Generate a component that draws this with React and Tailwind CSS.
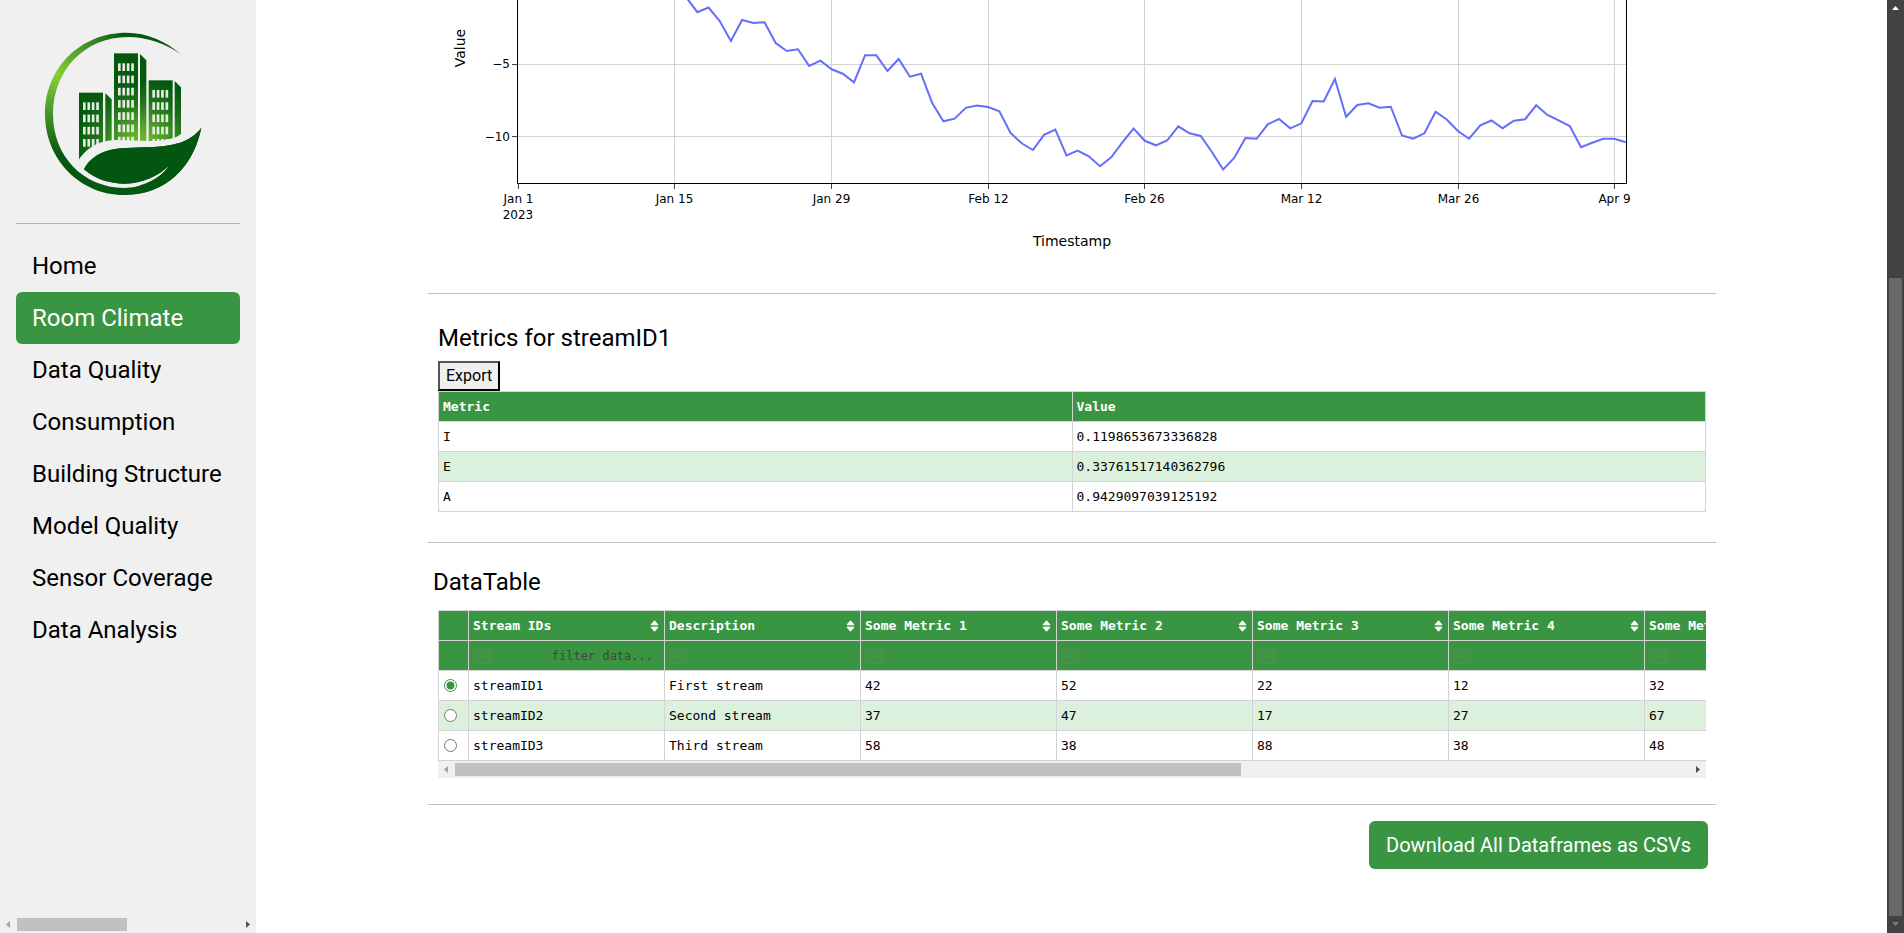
import React from "react";

const NAV = [
  "Home",
  "Room Climate",
  "Data Quality",
  "Consumption",
  "Building Structure",
  "Model Quality",
  "Sensor Coverage",
  "Data Analysis",
];

const METRICS = [
  ["I", "0.1198653673336828"],
  ["E", "0.33761517140362796"],
  ["A", "0.9429097039125192"],
];

const COLUMNS = [
  "Stream IDs",
  "Description",
  "Some Metric 1",
  "Some Metric 2",
  "Some Metric 3",
  "Some Metric 4",
  "Some Metric 5",
];

const STREAMS = [
  ["streamID1", "First stream", 42, 52, 22, 12, 32],
  ["streamID2", "Second stream", 37, 47, 17, 27, 67],
  ["streamID3", "Third stream", 58, 38, 88, 38, 48],
];

// Daily readings as plot heights, starting on Jan 16.
const FIRST_DAY = 15;
const LINE = [
  -2.6, 12.2, 7.5, 21, 41, 20, 23, 22.3, 43, 51, 49.3, 66, 60.7, 69.3, 73.7, 82.3, 55.2, 55.3, 71, 59,
  76.7, 73.7, 103, 121.3, 118.7, 107.8, 105.5, 107, 111.3, 133, 143.3, 150, 134.8, 129.7, 155.5, 150.7,
  156.3, 166.2, 157.3, 142.3, 128.6, 140.8, 145.3, 140.5, 126.3, 133.3, 136, 152, 169.5, 158, 138, 138.8,
  124.3, 119, 128.3, 123.3, 101, 101.5, 79, 116.7, 105, 103.3, 107.7, 106.7, 135.5, 138.7, 133.3, 111.8,
  119.5, 131, 138.7, 125.3, 120.5, 128.2, 120.7, 119.2, 105.3, 115, 120.3, 126, 147.2, 142.8, 138.8,
  138.8, 142.3,
];
const DAY = 11.185;
const ORIGIN = 90.4;
const POINTS = LINE.map((y, i) => `${(ORIGIN + (i + FIRST_DAY) * DAY).toFixed(1)},${y}`).join(" ");

const X_TICKS = [
  [90.5, "Jan 1"],
  [246.5, "Jan 15"],
  [403.5, "Jan 29"],
  [560.5, "Feb 12"],
  [716.5, "Feb 26"],
  [873.5, "Mar 12"],
  [1030.5, "Mar 26"],
  [1186.5, "Apr 9"],
];

function Building({ x, y, w, sideX, sideTop, bottom, rows, winX, winY }) {
  const windows = [];
  for (let r = 0; r < rows; r++) {
    for (let c = 0; c < 4; c++) {
      windows.push(
        <rect key={`${r}-${c}`} x={winX + c * 13.2} y={winY + r * 36.7} width="8" height="23" fill="#e4ece0" />
      );
    }
  }
  return (
    <g>
      <rect x={x} y={y} width={w} height={bottom - y} fill="url(#tower)" />
      <path d={`M${sideX} ${y + 2} L${sideX + 19} ${sideTop} V${bottom} H${sideX} Z`} fill="url(#tower)" />
      {windows}
    </g>
  );
}

function Logo() {
  return (
    <svg viewBox="48 48 672 573" className="block w-full" role="img" aria-label="Green city logo">
      <defs>
        <radialGradient id="tower" gradientUnits="userSpaceOnUse" cx="425" cy="440" r="200">
          <stop offset="0" stopColor="#7dc332" />
          <stop offset="0.3" stopColor="#57a329" />
          <stop offset="0.7" stopColor="#1d701a" />
          <stop offset="1" stopColor="#04590f" />
        </radialGradient>
        <radialGradient id="ring" gradientUnits="userSpaceOnUse" cx="170" cy="225" r="240">
          <stop offset="0" stopColor="#86d039" />
          <stop offset="0.45" stopColor="#4c9a2b" />
          <stop offset="1" stopColor="#04580f" />
        </radialGradient>
      </defs>
      <Building x={237} y={278} w={72} sideX={316} sideTop={298} bottom={480} rows={4} winX={249} winY={307} />
      <Building x={342} y={160} w={72} sideX={420} sideTop={181} bottom={440} rows={7} winX={354} winY={190} />
      <Building x={446} y={241} w={72} sideX={524} sideTop={262} bottom={440} rows={5} winX={457} winY={270} />
      <path
        d="M234 482 C255 450 290 422 342 420 C400 419 480 432 530 410 L552 396 L552 450 L300 500 L236 500 Z"
        fill="#f0f0f0"
      />
      <path
        d="M542 162 C500 125 440 98 380 98 C240 98 135 205 135 342 C135 478 240 585 372 585 C500 585 580 500 604 383 C570 428 520 436 470 440 C420 444 370 440 330 450 C290 460 262 485 252 508 C290 540 330 551 375 551 C430 551 480 525 508 496 C484 533 430 564 372 564 C250 562 159 470 159 342 C159 215 250 111 385 111 C440 111 500 132 542 162 Z"
        fill="url(#ring)"
      />
      <path
        d="M604 383 C570 428 520 436 470 440 C420 444 370 440 330 450 C290 460 262 485 252 508 C290 540 330 551 375 551 C430 551 480 525 508 496 C488 528 455 547 420 556 L420 580 C520 560 585 480 604 383 Z"
        fill="#02560f"
      />
    </svg>
  );
}

function Arrow({ dir, className }) {
  const paths = {
    left: "M10 5 V12 L6 8.5 Z",
    right: "M7 5 V12 L11 8.5 Z",
    up: "M5 10 H12 L8.5 6 Z",
    down: "M5 6 H12 L8.5 10 Z",
  };
  return (
    <svg viewBox="0 0 17 17" className={`size-[17px] shrink-0 ${className}`} aria-hidden="true">
      <path d={paths[dir]} fill="currentColor" />
    </svg>
  );
}

function Chart() {
  return (
    <svg
      viewBox="0 0 1288 269"
      className="block w-full font-['DejaVu_Sans',Verdana,sans-serif]"
      role="img"
      aria-label="Value by timestamp"
    >
      <g stroke="#d3d3d3" strokeWidth="1" shapeRendering="crispEdges">
        {X_TICKS.slice(1).map(([x]) => (
          <line key={x} x1={x} x2={x} y1="0" y2="183" />
        ))}
        <line x1="90" x2="1198" y1="64.5" y2="64.5" />
        <line x1="90" x2="1198" y1="136.5" y2="136.5" />
      </g>
      <polyline points={POINTS} fill="none" stroke="#636efa" strokeWidth="2" strokeLinejoin="miter" />
      <g stroke="#000" strokeWidth="1" fill="none" shapeRendering="crispEdges">
        <path d="M89.5 0 V183.5 H1198.5 V0" />
      </g>
      <g stroke="#444" strokeWidth="1" shapeRendering="crispEdges">
        {X_TICKS.map(([x]) => (
          <line key={x} x1={x} x2={x} y1="184" y2="189" />
        ))}
        <line x1="84" x2="89" y1="64.5" y2="64.5" />
        <line x1="84" x2="89" y1="136.5" y2="136.5" />
      </g>
      <g fontSize="12" textAnchor="middle" fill="#000">
        {X_TICKS.map(([x, label]) => (
          <text key={label} x={x} y="203">
            {label}
          </text>
        ))}
        <text x="90" y="219">
          2023
        </text>
      </g>
      <g fontSize="12" textAnchor="end" fill="#000">
        <text x="82" y="68">
          −5
        </text>
        <text x="82" y="141">
          −10
        </text>
      </g>
      <g fontSize="14" textAnchor="middle" fill="#000">
        <text x="644" y="246">
          Timestamp
        </text>
        <text transform="translate(37 48) rotate(-90)">Value</text>
      </g>
    </svg>
  );
}

function SortIcon() {
  return (
    <svg viewBox="0 0 9 12" className="h-3 w-[9px]" aria-hidden="true">
      <path
        d="M4.5 0.8 L8 4.8 H1 Z M4.5 11.2 L1 7.2 H8 Z"
        fill="#fff"
        stroke="#fff"
        strokeWidth="1"
        strokeLinejoin="round"
      />
    </svg>
  );
}

export default function App() {
  return (
    <div className="flex h-screen overflow-hidden bg-white font-[Roboto,sans-serif] text-black">
      <aside className="flex w-64 shrink-0 flex-col bg-[#f0f0f0]">
        <div className="flex-1 px-4 pt-4">
          <Logo />
          <hr className="my-4 border-[#b4b4b4]" />
          <nav className="flex flex-col">
            {NAV.map((item) => (
              <a
                key={item}
                href="#"
                className={
                  item === "Room Climate"
                    ? "rounded-md bg-[#3a9542] px-4 py-2 text-2xl leading-9 whitespace-nowrap text-white"
                    : "px-4 py-2 text-2xl leading-9 whitespace-nowrap"
                }
              >
                {item}
              </a>
            ))}
          </nav>
        </div>
        <div className="flex h-[17px] items-center">
          <Arrow dir="left" className="text-[#a3a3a3]" />
          <div className="flex-1">
            <div className="h-[13px] w-[49.5%] bg-[#c1c1c1]" />
          </div>
          <Arrow dir="right" className="text-[#505050]" />
        </div>
      </aside>

      <main className="min-w-0 flex-1 overflow-hidden pr-[171px] pl-[172px]">
        <Chart />

        <section className="mt-6 border-t border-[#c0c0c0] px-[10px] pt-[30px] pb-[30px]">
          <h2 className="text-2xl leading-7 font-normal">Metrics for streamID1</h2>
          <button
            type="button"
            className="mt-[9px] block h-[30px] border-2 border-t-[#555] border-r-black border-b-black border-l-[#555] bg-[#efefef] px-[6px] text-base leading-6"
          >
            Export
          </button>
          <table className="w-full table-fixed border-collapse font-['DejaVu_Sans_Mono',monospace] text-[13px] leading-5">
            <thead>
              <tr className="h-[30px] bg-[#3a9542] text-left text-white">
                <th className="border border-[#d3d3d3] px-1 font-bold">Metric</th>
                <th className="border border-[#d3d3d3] px-1 font-bold">Value</th>
              </tr>
            </thead>
            <tbody>
              {METRICS.map(([name, value]) => (
                <tr key={name} className="h-[30px] even:bg-[#dcf1dd]">
                  <td className="border border-[#d3d3d3] px-1">{name}</td>
                  <td className="border border-[#d3d3d3] px-1">{value}</td>
                </tr>
              ))}
            </tbody>
          </table>
        </section>

        <section className="border-y border-[#c0c0c0] pt-[25px] pb-[26px]">
          <h2 className="pl-[5px] text-2xl leading-7 font-normal">DataTable</h2>
          <div className="mx-[10px] mt-[14px]">
            <div className="overflow-hidden">
              <table className="w-[1403px] table-fixed border-collapse font-['DejaVu_Sans_Mono',monospace] text-[13px] leading-5">
                <colgroup>
                  <col className="w-[30px]" />
                  {COLUMNS.map((c) => (
                    <col key={c} className="w-[196px]" />
                  ))}
                </colgroup>
                <thead>
                  <tr className="h-[30px] bg-[#3a9542] text-left text-white">
                    <th className="border border-[#d3d3d3]" />
                    {COLUMNS.map((c) => (
                      <th key={c} className="border border-[#d3d3d3] px-1 font-bold">
                        <div className="flex items-center justify-between">
                          {c}
                          <button type="button" aria-label={`Sort by ${c}`} className="pr-[1px]">
                            <SortIcon />
                          </button>
                        </div>
                      </th>
                    ))}
                  </tr>
                  <tr className="h-[30px] bg-[#3a9542]">
                    <th className="border border-[#d3d3d3]" />
                    {COLUMNS.map((c, i) => (
                      <th key={c} className="border border-[#d3d3d3] px-[5px] font-normal">
                        <div className="flex items-center">
                          <button
                            type="button"
                            className="flex h-4 w-[17px] shrink-0 items-center justify-center rounded-[3px] border-2 border-[#4d8f4b] font-['DejaVu_Sans',sans-serif] text-[8px] leading-none font-bold text-[#4d8f4b]"
                          >
                            Aa
                          </button>
                          <input
                            type="text"
                            aria-label={`Filter ${c}`}
                            placeholder={i === 0 ? "filter data..." : undefined}
                            className="h-5 w-full min-w-0 pr-[6px] text-right text-xs text-[#444] outline-none placeholder:text-[#444]"
                          />
                        </div>
                      </th>
                    ))}
                  </tr>
                </thead>
                <tbody>
                  {STREAMS.map((row, r) => (
                    <tr key={row[0]} className="h-[30px] even:bg-[#dcf1dd]">
                      <td className="border border-[#d3d3d3] pl-[5px]">
                        <input
                          type="radio"
                          name="stream"
                          aria-label={`Select ${row[0]}`}
                          defaultChecked={r === 0}
                          className="block size-[13px] accent-[#3a9542]"
                        />
                      </td>
                      {row.map((v, i) => (
                        <td key={i} className="border border-[#d3d3d3] px-1">
                          {v}
                        </td>
                      ))}
                    </tr>
                  ))}
                </tbody>
              </table>
            </div>
            <div className="flex h-[17px] items-center bg-[#f0f0f0]">
              <Arrow dir="left" className="text-[#a3a3a3]" />
              <div className="flex-1">
                <div className="h-[13px] w-[63.7%] bg-[#c1c1c1]" />
              </div>
              <Arrow dir="right" className="text-[#505050]" />
            </div>
          </div>
        </section>

        <div className="flex justify-end pt-4 pr-2">
          <button type="button" className="h-12 rounded-md bg-[#3a9542] px-[17px] text-xl text-white">
            Download All Dataframes as CSVs
          </button>
        </div>
      </main>

      <div className="flex w-[17px] shrink-0 flex-col items-center bg-[#424242]">
        <Arrow dir="up" className="text-white" />
        <div className="flex w-[13px] flex-1 flex-col justify-end">
          <div className="h-[71%] bg-[#686868]" />
        </div>
        <Arrow dir="down" className="text-[#7b7b7b]" />
      </div>
    </div>
  );
}
